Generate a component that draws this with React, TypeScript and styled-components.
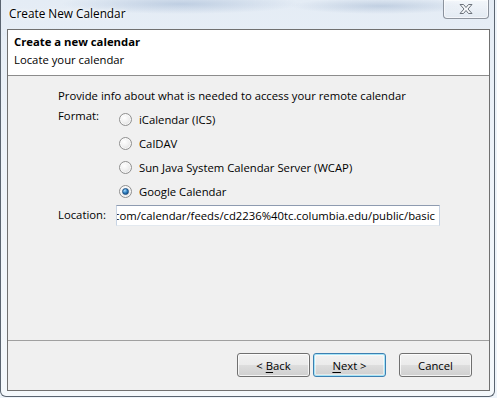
import styled, { createGlobalStyle, css } from 'styled-components'

const UI_FONT = `"Open Sans", "Noto Sans", sans-serif`

const GlobalStyle = createGlobalStyle`
  html, body {
    margin: 0;
    padding: 0;
  }
  body {
    width: 497px;
    height: 398px;
    overflow: hidden;
    background: #eef4fa;
    font-family: ${UI_FONT};
    font-size: 11.3px;
    color: #000;
  }
`

const Window = styled.div`
  box-sizing: border-box;
  width: 495px;
  height: 397px;
  display: flex;
  flex-direction: column;
  padding: 0 4px 5px 6px;
  border: 1px solid #5a6470;
  border-top: none;
  border-radius: 0 0 6px 6px;
  background:
    radial-gradient(ellipse 120px 10px at 180px 4px, rgba(120, 150, 190, 0.35), transparent),
    radial-gradient(ellipse 90px 8px at 380px 6px, rgba(110, 140, 180, 0.3), transparent),
    radial-gradient(ellipse 60px 6px at 60px 34px, rgba(130, 170, 220, 0.35), transparent),
    linear-gradient(180deg, #e4ecf5 0%, #eef3f9 40%, #f4f8fb 100%);
`

const TitleBar = styled.div`
  height: 29px;
  display: flex;
  justify-content: space-between;
  align-items: flex-start;
  padding-left: 2px;
`

const TitleText = styled.div`
  line-height: 29px;
  height: 29px;
  margin-top: -1px;
  font-size: 11.8px;
  color: #000;
  text-shadow: 0 0 6px #fff, 0 0 3px #fff;
`

const CloseButton = styled.div`
  box-sizing: border-box;
  width: 46px;
  height: 19px;
  margin-right: 1px;
  display: flex;
  align-items: center;
  justify-content: center;
  border: 1px solid rgba(60, 70, 85, 0.55);
  border-top: none;
  border-radius: 0 0 4px 4px;
  background: linear-gradient(180deg, rgba(255, 255, 255, 0.55), rgba(225, 232, 240, 0.6));
  box-shadow: inset 0 0 0 1px rgba(255, 255, 255, 0.6);
`

const Client = styled.div`
  flex: 1;
  display: flex;
  flex-direction: column;
  border: 1px solid #707070;
  background: #f0f0f0;
`

const Header = styled.div`
  height: 46px;
  box-sizing: border-box;
  padding: 3px 6px 0;
  background: #fff;
  border-bottom: 1px solid #8c8c8c;
`

const HeaderLine = styled.div<{ $bold?: boolean }>`
  line-height: 18px;
  font-weight: ${({ $bold }) => ($bold ? 700 : 400)};
`

const Body = styled.div`
  flex: 1;
  display: grid;
  grid-template-columns: 58px 324px;
  grid-template-rows: auto auto auto;
  align-content: start;
  padding: 12px 0 0 50px;
`

const Intro = styled.div`
  grid-column: 1 / 3;
  line-height: 16px;
  height: 19px;
`

const FieldLabel = styled.div<{ $top?: boolean }>`
  line-height: 16px;
  align-self: ${({ $top }) => ($top ? 'start' : 'center')};
  padding-top: ${({ $top }) => ($top ? '1px' : '0')};
`

const RadioGroup = styled.div`
  display: flex;
  flex-direction: column;
`

const RadioRow = styled.label`
  height: 24px;
  display: flex;
  align-items: center;
  gap: 7px;
  padding-left: 3px;
`

const RadioCircle = styled.span<{ $checked?: boolean }>`
  box-sizing: border-box;
  width: 13px;
  height: 13px;
  border-radius: 50%;
  border: 1px solid #8f8f8f;
  background: radial-gradient(circle at 40% 35%, #ffffff 0%, #f0f0f0 45%, #d4d4d4 100%);
  box-shadow: inset 0 0 0 1px rgba(255, 255, 255, 0.7);
  display: flex;
  align-items: center;
  justify-content: center;
  ${({ $checked }) =>
    $checked &&
    css`
      &::after {
        content: '';
        width: 5px;
        height: 5px;
        border-radius: 50%;
        background: radial-gradient(circle at 35% 30%, #a9dcff 0%, #2d7fc0 50%, #0b3a6e 100%);
        border: 1px solid #1b4f83;
      }
    `}
`

const LocationRow = styled.div`
  grid-column: 2;
  margin-top: 2px;
`

const TextBox = styled.div`
  box-sizing: border-box;
  width: 324px;
  height: 21px;
  display: flex;
  justify-content: flex-end;
  align-items: center;
  overflow: hidden;
  white-space: nowrap;
  padding: 0 4px;
  background: #fff;
  border: 1px solid #abadb3;
  border-top-color: #8e9bb0;
  border-left-color: #c7d3e3;
  border-right-color: #c7d3e3;
  border-bottom-color: #e3e9ef;
  line-height: 16px;
`

const Footer = styled.div`
  height: 50px;
  box-sizing: border-box;
  display: flex;
  justify-content: flex-end;
  align-items: flex-start;
  padding: 12px 17px 0 0;
  border-top: 1px solid #a0a0a0;
`

const Button = styled.button<{ $default?: boolean; $gap?: number }>`
  box-sizing: border-box;
  width: 73px;
  height: 24px;
  margin-left: ${({ $gap }) => $gap ?? 0}px;
  padding: 0;
  font-family: ${UI_FONT};
  font-size: 11.3px;
  color: #000;
  border: 1px solid #707070;
  border-radius: 3px;
  background: linear-gradient(180deg, #f2f2f2 0%, #ebebeb 48%, #dddddd 52%, #cfcfcf 100%);
  box-shadow: inset 0 0 0 1px rgba(255, 255, 255, 0.75);
  ${({ $default }) =>
    $default &&
    css`
      border-color: #3c7fb1;
      box-shadow: inset 0 0 0 1px #a6e4f7, inset 0 0 0 2px rgba(255, 255, 255, 0.5);
    `}

  u {
    text-decoration: underline;
    text-underline-offset: 2px;
  }
`

function CloseGlyph() {
  return (
    <svg width="16" height="12" viewBox="0 0 16 12">
      <path
        d="M2 1.5 H5.5 L8 4.5 L10.5 1.5 H14 L10 6 L14 10.5 H10.5 L8 7.5 L5.5 10.5 H2 L6 6 Z"
        fill="#f7f9fb"
        stroke="#6c737c"
        strokeWidth="1"
        strokeLinejoin="round"
      />
    </svg>
  )
}

const formats = [
  { label: 'iCalendar (ICS)', checked: false },
  { label: 'CalDAV', checked: false },
  { label: 'Sun Java System Calendar Server (WCAP)', checked: false },
  { label: 'Google Calendar', checked: true },
]

export default function App() {
  return (
    <>
      <GlobalStyle />
      <Window>
        <TitleBar>
          <TitleText>Create New Calendar</TitleText>
          <CloseButton>
            <CloseGlyph />
          </CloseButton>
        </TitleBar>
        <Client>
          <Header>
            <HeaderLine $bold>Create a new calendar</HeaderLine>
            <HeaderLine>Locate your calendar</HeaderLine>
          </Header>
          <Body>
            <Intro>Provide info about what is needed to access your remote calendar</Intro>
            <FieldLabel $top>Format:</FieldLabel>
            <RadioGroup>
              {formats.map((f) => (
                <RadioRow key={f.label}>
                  <RadioCircle $checked={f.checked} />
                  {f.label}
                </RadioRow>
              ))}
            </RadioGroup>
            <FieldLabel>Location:</FieldLabel>
            <LocationRow>
              <TextBox>
                <span>http://www.google.com/calendar/feeds/cd2236%40tc.columbia.edu/public/basic</span>
              </TextBox>
            </LocationRow>
          </Body>
          <Footer>
            <Button>
              &lt; <u>B</u>ack
            </Button>
            <Button $default $gap={3}>
              <u>N</u>ext &gt;
            </Button>
            <Button $gap={13}>Cancel</Button>
          </Footer>
        </Client>
      </Window>
    </>
  )
}
